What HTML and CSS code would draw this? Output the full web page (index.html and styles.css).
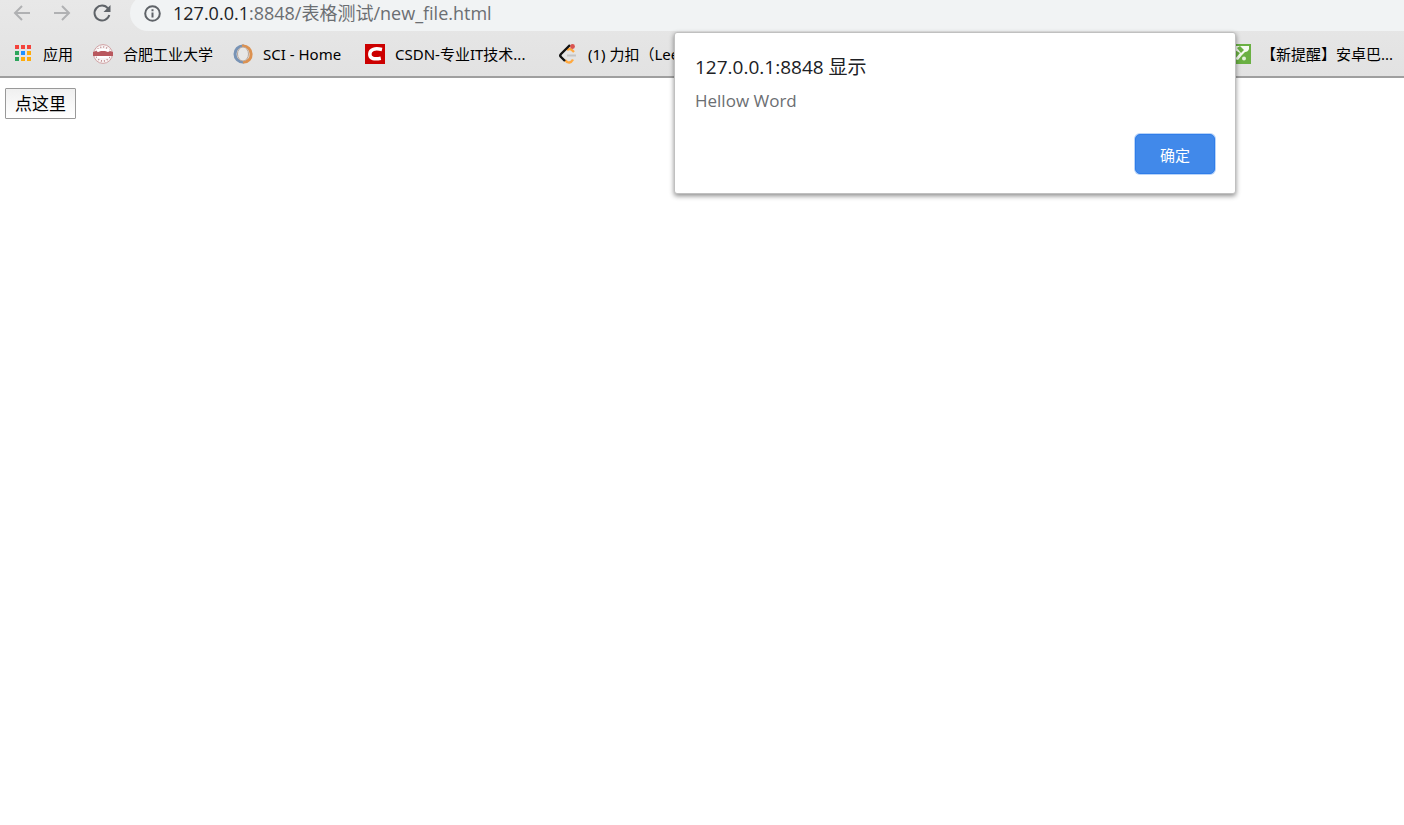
FILE: index.html
```html
<!DOCTYPE html>
<html lang="zh-CN">
<head>
  <meta charset="UTF-8">
  <meta name="viewport" content="width=device-width, initial-scale=1.0">
  <title>new_file</title>
  <link rel="stylesheet" href="styles.css">
</head>
<body>
  <header class="browser">
    <div class="toolbar">
      <button type="button" class="nav-btn" aria-label="后退" disabled>
        <svg width="20" height="20" viewBox="0 0 20 20"><path d="M18 10H3M10 3L3 10l7 7"/></svg>
      </button>
      <button type="button" class="nav-btn" aria-label="前进" disabled>
        <svg width="20" height="20" viewBox="0 0 20 20"><path d="M2 10h15M10 3l7 7-7 7"/></svg>
      </button>
      <button type="button" class="nav-btn reload" aria-label="重新加载">
        <svg width="20" height="20" viewBox="0 0 20 20"><path d="M16 5.5A7.5 7.5 0 1 0 17.3 12"/><path class="solid" d="M18.5 2v7h-7z"/></svg>
      </button>
      <div class="address">
        <svg class="info" width="17" height="17" viewBox="0 0 17 17"><circle cx="8.500" cy="8.500" r="7.300"/><path d="M8.500 7.500v5M8.500 4.300v1.900"/></svg>
        <span class="url"><span class="host">127.0.0.1</span>:8848/表格测试/new_file.html</span>
      </div>
    </div>

    <nav class="bookmarks">
      <a class="bookmark" href="#">
        <svg width="20" height="20" viewBox="0 0 20 20">
          <path fill="#f4433c" d="M2 1h4v4H2zM8 1h4v4H8zM14 1h4v4h-4z"/>
          <path fill="#2da55b" d="M2 7h4v4H2zM2 13h4v4H2z"/>
          <path fill="#1e90ff" d="M8 7h4v4H8z"/>
          <path fill="#ffab0a" d="M14 7h4v4h-4zM8 13h4v4H8zM14 13h4v4h-4z"/>
        </svg>
        <span>应用</span>
      </a>
      <a class="bookmark" href="#">
        <svg width="20" height="20" viewBox="0 0 20 20">
          <circle cx="10" cy="10" r="9.400" fill="#f7f4f4" stroke="#d0a0a2"/>
          <circle cx="10" cy="10" r="7" fill="none" stroke="#bd8488" stroke-width="1.500" stroke-dasharray="1 2"/>
          <path fill="#fff" d="M4 5h12v9H4z"/>
          <path fill="#b9585e" d="M0 8l3-1 2 1 3-1h4l3 1 2-1 3 1v4H0z"/>
        </svg>
        <span>合肥工业大学</span>
      </a>
      <a class="bookmark short" href="#">
        <svg width="20" height="20" viewBox="0 0 20 20" fill="none">
          <path d="M11 2C-1 1-1 19 11 18" stroke="#7893b5" stroke-width="3"/>
          <path d="M9 2c12-1 12 17 1 16" stroke="#dc9150" stroke-width="3"/>
          <ellipse cx="10" cy="10" rx="5.500" ry="7" fill="#e7e7e7" stroke="#b7a69a"/>
        </svg>
        <span>SCI - Home</span>
      </a>
      <a class="bookmark wide" href="#">
        <svg width="20" height="20" viewBox="0 0 20 20">
          <path fill="#cc0000" d="M0 0h20v20H0z"/>
          <path fill="none" stroke="#fff" stroke-width="3.500" d="M17 5.500C10 4 5 5 4.800 10c-.2 5 5 5.500 11 4.300"/>
        </svg>
        <span>CSDN-专业IT技术...</span>
      </a>
      <a class="bookmark" href="#">
        <svg width="20" height="20" viewBox="0 0 20 20" fill="none" stroke-width="2.400">
          <path stroke="#ffa940" d="M7 16c3 4 6 3 8-.5M9 6c3-2 4-1 7 2"/>
          <path stroke="#c4c4c4" stroke-width="2" d="M9 11.500h9"/>
          <path stroke="#111" d="M12 1L3 10q-1.500 1.500 0 3l4 4"/>
          <circle cx="14.500" cy="2.500" r="2.400" fill="#d9534f"/>
        </svg>
        <span>(1) 力扣（Lee</span>
      </a>
      <a class="bookmark last" href="#">
        <svg width="20" height="20" viewBox="0 0 20 20">
          <path fill="#6ab043" d="M0 0h20v20H0z"/>
          <path fill="#f5faf1" d="M2 2h16v3q-1 3-4 3l-3 3-4 5-3-1 5-6-5-3z"/>
          <path fill="#6ab043" d="M9 2l4 4-3 3-4-5z"/>
          <circle cx="13" cy="14.500" r="2" fill="#e3f1da"/>
        </svg>
        <span>【新提醒】安卓巴...</span>
      </a>
    </nav>
  </header>

  <main class="page">
    <button type="button" class="page-btn">点这里</button>
  </main>

  <div class="dialog" role="alertdialog" aria-labelledby="dialog-title" aria-describedby="dialog-text">
    <h1 id="dialog-title">127.0.0.1:8848 显示</h1>
    <p id="dialog-text">Hellow Word</p>
    <div class="dialog-actions">
      <button type="button" class="ok-btn">确定</button>
    </div>
  </div>
</body>
</html>
```
FILE: styles.css
```css
* {
  box-sizing: border-box;
}

body {
  margin: 0;
  min-height: 100vh;
  position: relative;
  background-color: #fff;
  color: #000;
  font-family: "Open Sans", "Noto Sans CJK SC", sans-serif;
  overflow-x: hidden;
}

button {
  font-family: inherit;
}

.browser {
  background: linear-gradient(#e8e8e8, #e2e2e2);
  border-bottom: 2px solid #9f9f9f;
}

/* 工具栏 */
.toolbar {
  display: flex;
  align-items: flex-end;
  height: 31px;
  padding-left: 12px;
  overflow: hidden;
}

.nav-btn {
  display: flex;
  width: 20px;
  height: 36px;
  margin-right: 20px;
  padding: 8px 0;
  border: none;
  background: none;
}

.nav-btn svg {
  flex: none;
  fill: none;
  stroke: #b0b1b3;
  stroke-width: 2;
}

.nav-btn.reload {
  margin-right: 18px;
}

.nav-btn.reload svg {
  stroke: #5f6368;
}

.nav-btn .solid {
  fill: #5f6368;
  stroke: none;
}

.address {
  display: flex;
  flex: 1;
  align-items: center;
  gap: 12px;
  height: 36px;
  padding-left: 14px;
  border-radius: 18px 0 0 18px;
  background-color: #f1f3f4;
  white-space: nowrap;
}

.info {
  fill: none;
  stroke: #5f6368;
  stroke-width: 2;
}

.url {
  font-size: 18px;
  line-height: 24px;
  color: #6b6e72;
}

.host {
  color: #202124;
}

/* 书签栏 */
.bookmarks {
  display: flex;
  align-items: center;
  gap: 20px;
  height: 45px;
  padding: 0 11px 0 13px;
}

.bookmark {
  display: flex;
  flex: none;
  align-items: center;
  gap: 10px;
  color: #000;
  font-family: "Noto Sans", "Noto Sans CJK SC", sans-serif;
  font-size: 15px;
  line-height: 20px;
  text-decoration: none;
  white-space: nowrap;
}

.bookmark.short {
  min-width: 112px;
}

.bookmark.wide {
  min-width: 173px;
}

.bookmark.last {
  margin-left: auto;
}

/* 页面内容 */
.page {
  padding: 10px 5px;
}

.page-btn {
  display: block;
  height: 31px;
  padding: 0 9px;
  border: 1px solid #999;
  border-radius: 1px;
  background: linear-gradient(#f0f0f0, #fff);
  color: #000;
  font-size: 17px;
  line-height: 24px;
}

/* 弹窗 */
.dialog {
  position: absolute;
  top: 32px;
  right: 168px;
  width: 562px;
  padding: 20px 20px 19px;
  border: 1px solid #c0c0c0;
  border-radius: 3px;
  background-color: #fff;
  box-shadow: 0 2px 5px rgba(0, 0, 0, 0.45);
}

.dialog h1 {
  margin: 0;
  color: #202124;
  font-size: 19px;
  font-weight: 400;
  line-height: 28px;
}

.dialog p {
  margin: 8px 0 21px;
  color: #6b6e72;
  font-size: 17px;
  line-height: 24px;
}

.dialog-actions {
  display: flex;
  justify-content: flex-end;
}

.ok-btn {
  width: 80px;
  height: 40px;
  padding: 0;
  border: 1px solid #2f7de9;
  border-radius: 5px;
  background-color: #4189ea;
  box-shadow: 0 0 0 1px #b9d4f8;
  color: #fff;
  font-size: 15px;
}
```
